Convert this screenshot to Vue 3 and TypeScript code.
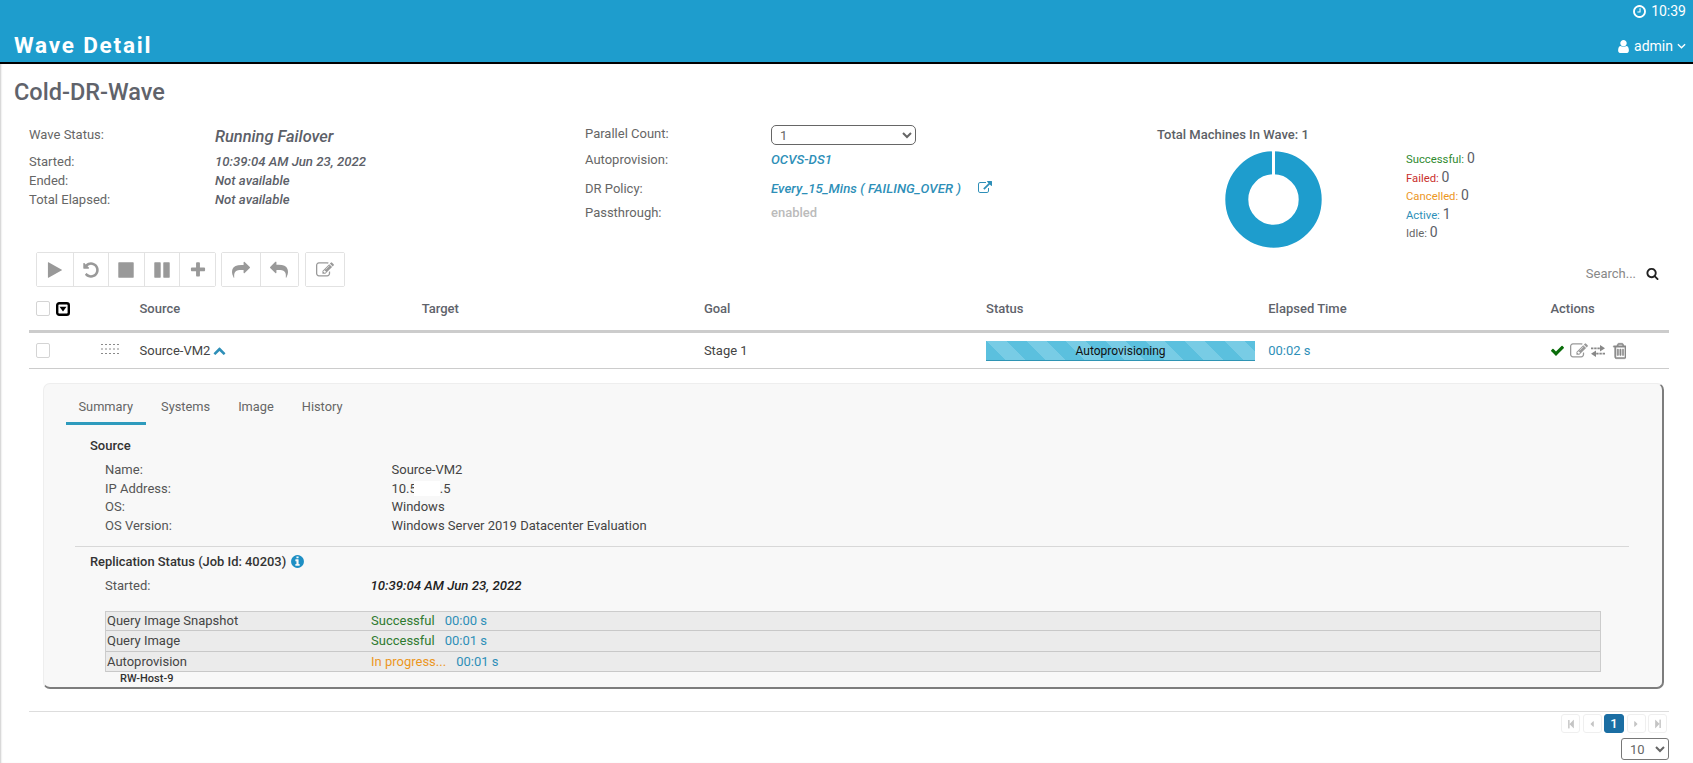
<script setup lang="ts">
const leftRows = [
  { label: 'Wave Status:', value: 'Running Failover', big: true },
  { label: 'Started:', value: '10:39:04 AM Jun 23, 2022', big: false },
  { label: 'Ended:', value: 'Not available', big: false },
  { label: 'Total Elapsed:', value: 'Not available', big: false },
]
const legend = [
  { label: 'Successful:', value: 0, cls: 'ok' },
  { label: 'Failed:', value: 0, cls: 'bad' },
  { label: 'Cancelled:', value: 0, cls: 'warn' },
  { label: 'Active:', value: 1, cls: 'act' },
  { label: 'Idle:', value: 0, cls: 'idle' },
]
const columns = ['Source', 'Target', 'Goal', 'Status', 'Elapsed Time', 'Actions']
const tabs = ['Summary', 'Systems', 'Image', 'History']
const steps = [
  { name: 'Query Image Snapshot', status: 'Successful', cls: 'ok', time: '00:00 s' },
  { name: 'Query Image', status: 'Successful', cls: 'ok', time: '00:01 s' },
  { name: 'Autoprovision', status: 'In progress...', cls: 'warn', time: '00:01 s' },
]
const P = {
  play: 'M1576 927l-1328 738q-23 13-39.500 3t-16.500-36v-1472q0-26 16.500-36t39.500 3l1328 738q23 13 23 31t-23 31z',
  undo: 'M1664 896q0 156-61 298t-164 245-245 164-298 61q-172 0-327-72.500t-264-204.500q-7-10-6.500-22.500t8.500-20.500l137-138q10-9 25-9 16 2 23 12 73 95 179 147t225 52q104 0 198.500-40.500t163.500-109.500 109.500-163.500 40.500-198.500-40.500-198.500-109.500-163.500-163.500-109.500-198.500-40.500q-98 0-188 35.500t-160 101.500l137 138q31 30 14 69-17 40-59 40h-448q-26 0-45-19t-19-45v-448q0-42 40-59 39-17 69 14l130 129q107-101 244.500-156.500t284.500-55.500q156 0 298 61t245 164 164 245 61 298z',
  stop: 'M1664 192v1408q0 26-19 45t-45 19h-1408q-26 0-45-19t-19-45v-1408q0-26 19-45t45-19h1408q26 0 45 19t19 45z',
  pause: 'M1664 192v1408q0 26-19 45t-45 19h-512q-26 0-45-19t-19-45v-1408q0-26 19-45t45-19h512q26 0 45 19t19 45zm-896 0v1408q0 26-19 45t-45 19h-512q-26 0-45-19t-19-45v-1408q0-26 19-45t45-19h512q26 0 45 19t19 45z',
  plus: 'M1600 736v192q0 40-28 68t-68 28h-416v416q0 40-28 68t-68 28h-192q-40 0-68-28t-28-68v-416h-416q-40 0-68-28t-28-68v-192q0-40 28-68t68-28h416v-416q0-40 28-68t68-28h192q40 0 68 28t28 68v416h416q40 0 68 28t28 68z',
  share: 'M1792 640q0 26-19 45l-512 512q-19 19-45 19t-45-19-19-45v-256h-224q-98 0-175.500 6t-154 21.500-133 42.500-105.500 69.500-79.500 101.500-47.500 140-18 185q0 55 5 123 0 6 2.500 23.500t2.500 26.500q0 15-8.500 25t-23.500 10q-16 0-28-17-7-9-13-22t-13.500-30-10.500-24q-127-285-127-451 0-199 53-333 162-403 875-403h224v-256q0-26 19-45t45-19 45 19l512 512q19 19 19 45z',
  reply: 'M1792 1120q0 166-127 451-3 7-10.500 24t-13.500 30-13 22q-12 17-28 17-15 0-23.500-10t-8.500-25q0-9 2.500-26.500t2.500-23.500q5-68 5-123 0-101-17.500-181t-48.500-138.500-80-101-105.500-69.500-133-42.500-154-21.500-175.500-6h-224v256q0 26-19 45t-45 19-45-19l-512-512q-19-19-19-45t19-45l512-512q19-19 45-19t45 19 19 45v256h224q713 0 875 403 53 134 53 333z',
  edit: 'M888 1184l116-116-152-152-116 116v56h96v96h56zm440-720q-16-16-33 1l-350 350q-17 17-1 33t33-1l350-350q17-17 1-33zm80 594v190q0 119-84.500 203.500t-203.500 84.500h-832q-119 0-203.500-84.500t-84.500-203.500v-832q0-119 84.500-203.500t203.500-84.500h832q63 0 117 25 15 7 18 23 3 17-9 29l-49 49q-14 14-32 8-23-6-45-6h-832q-66 0-113 47t-47 113v832q0 66 47 113t113 47h832q66 0 113-47t47-113v-126q0-13 9-22l64-64q15-15 35-7t20 29zm-96-738l288 288-672 672h-288v-288zm444 132l-92 92-288-288 92-92q28-28 68-28t68 28l152 152q28 28 28 68t-28 68z',
  check: 'M1671 566q0 40-28 68l-724 724-136 136q-28 28-68 28t-68-28l-136-136-362-362q-28-28-28-68t28-68l136-136q28-28 68-28t68 28l294 295 656-657q28-28 68-28t68 28l136 136q28 28 28 68z',
  trash: 'M704 736v576q0 14-9 23t-23 9h-64q-14 0-23-9t-9-23v-576q0-14 9-23t23-9h64q14 0 23 9t9 23zm256 0v576q0 14-9 23t-23 9h-64q-14 0-23-9t-9-23v-576q0-14 9-23t23-9h64q14 0 23 9t9 23zm256 0v576q0 14-9 23t-23 9h-64q-14 0-23-9t-9-23v-576q0-14 9-23t23-9h64q14 0 23 9t9 23zm128 724v-948h-896v948q0 22 7 40.500t14.500 27 10.500 8.500h832q3 0 10.500-8.500t14.500-27 7-40.500zm-672-1076h448l-48-117q-7-9-17-11h-317q-10 2-17 11zm928 32v64q0 14-9 23t-23 9h-96v948q0 83-47 143.500t-113 60.500h-832q-66 0-113-58.500t-47-141.500v-952h-96q-14 0-23-9t-9-23v-64q0-14 9-23t23-9h309l70-167q15-37 54-63t79-26h320q40 0 79 26t54 63l70 167h309q14 0 23 9t9 23z',
  chevUp: 'M1683 1331l-166 165q-19 19-45 19t-45-19l-531-531-531 531q-19 19-45 19t-45-19l-166-165q-19-19-19-45.500t19-45.500l742-741q19-19 45-19t45 19l742 741q19 19 19 45.500t-19 45.500z',
  ext: 'M1408 928v320q0 119-84.500 203.500t-203.500 84.500h-832q-119 0-203.500-84.500t-84.500-203.500v-832q0-119 84.500-203.500t203.500-84.500h704q14 0 23 9t9 23v64q0 14-9 23t-23 9h-704q-66 0-113 47t-47 113v832q0 66 47 113t113 47h832q66 0 113-47t47-113v-320q0-14 9-23t23-9h64q14 0 23 9t9 23zm384-864v512q0 26-19 45t-45 19-45-19l-176-176-652 652q-10 10-23 10t-23-10l-114-114q-10-10-10-23t10-23l652-652-176-176q-19-19-19-45t19-45 45-19h512q26 0 45 19t19 45z',
  info: 'M1152 1376v-160q0-14-9-23t-23-9h-96v-512q0-14-9-23t-23-9h-320q-14 0-23 9t-9 23v160q0 14 9 23t23 9h96v320h-96q-14 0-23 9t-9 23v160q0 14 9 23t23 9h448q14 0 23-9t9-23zm-128-896v-160q0-14-9-23t-23-9h-192q-14 0-23 9t-9 23v160q0 14 9 23t23 9h192q14 0 23-9t9-23zm640 416q0 209-103 385.500t-279.500 279.500-385.500 103-385.500-103-279.500-279.500-103-385.500 103-385.500 279.500-279.500 385.500-103 385.500 103 279.500 279.500 103 385.500z',
  clock: 'M1024 544v448q0 14-9 23t-23 9h-320q-14 0-23-9t-9-23v-64q0-14 9-23t23-9h224v-352q0-14 9-23t23-9h64q14 0 23 9t9 23zm416 352q0-148-73-273t-198-198-273-73-273 73-198 198-73 273 73 273 198 198 273 73 273-73 198-198 73-273zm224 0q0 209-103 385.500t-279.500 279.500-385.500 103-385.500-103-279.500-279.500-103-385.500 103-385.500 279.500-279.500 385.500-103 385.500 103 279.500 279.500 103 385.500z',
  user: 'M1536 1399q0 109-62.500 187t-150.500 78h-854q-88 0-150.500-78t-62.500-187q0-85 8.500-160.500t31.500-152 58.500-131 94-89 134.500-34.500q131 128 313 128t313-128q76 0 134.500 34.500t94 89 58.500 131 31.500 152 8.500 160.500zm-256-887q0 159-112.500 271.500t-271.500 112.500-271.500-112.500-112.500-271.500 112.500-271.500 271.500-112.500 271.500 112.500 112.500 271.500z',
  search: 'M1216 832q0-185-131.500-316.500t-316.500-131.500-316.500 131.500-131.500 316.500 131.500 316.500 316.500 131.500 316.500-131.500 131.500-316.500zm512 832q0 52-38 90t-90 38q-54 0-90-38l-343-342q-179 124-399 124-143 0-273.500-55.500t-225-150-150-225-55.500-273.500 55.500-273.500 150-225 225-150 273.500-55.500 273.500 55.500 225 150 150 225 55.500 273.500q0 220-124 399l343 343q37 37 37 90z',
  first: 'M1363 141q19-19 32-13t13 32v1472q0 26-13 32t-32-13l-710-710q-9-9-13-19v710q0 26-19 45t-45 19h-128q-26 0-45-19t-19-45v-1408q0-26 19-45t45-19h128q26 0 45 19t19 45v710q4-10 13-19z',
  last: 'M429 1651q-19 19-32 13t-13-32v-1472q0-26 13-32t32 13l710 710q9 9 13 19v-710q0-26 19-45t45-19h128q26 0 45 19t19 45v1408q0 26-19 45t-45 19h-128q-26 0-45-19t-19-45v-710q-4 10-13 19z',
  prev: 'M1216 448v896q0 26-19 45t-45 19-45-19l-448-448q-19-19-19-45t19-45l448-448q19-19 45-19t45 19 19 45z',
  next: 'M1152 896q0 26-19 45l-448 448q-19 19-45 19t-45-19-19-45v-896q0-26 19-45t45-19 45 19l448 448q19 19 19 45z',
}
const toolbar = [
  [P.play, P.undo, P.stop, P.pause, P.plus],
  [P.share, P.reply],
  [P.edit],
]
</script>

<template>
  <div class="page">
    <header class="topbar">
      <div class="clock">
        <svg class="ic-clock" viewBox="0 0 1792 1792"><path :d="P.clock" /></svg>
        <span>10:39</span>
      </div>
      <div class="titlebar">
        <h1>Wave Detail</h1>
        <div class="user">
          <svg class="ic-user" viewBox="0 0 1792 1792"><path :d="P.user" /></svg>
          <span>admin</span>
          <svg class="ic-down" viewBox="0 0 10 6"><path d="M1 1l4 4 4-4" /></svg>
        </div>
      </div>
    </header>

    <main class="content">
      <h2 class="wave-name">Cold-DR-Wave</h2>

      <section class="summary">
        <div class="col-left">
          <template v-for="r in leftRows" :key="r.label">
            <span class="lbl">{{ r.label }}</span>
            <span class="val-it" :class="{ big: r.big }">{{ r.value }}</span>
          </template>
        </div>
        <div class="col-mid">
          <span class="lbl">Parallel Count:</span>
          <select class="sel-par"><option>1</option></select>
          <span class="lbl">Autoprovision:</span>
          <span class="link-it">OCVS-DS1</span>
          <span class="lbl">DR Policy:</span>
          <span class="policy">
            <span class="link-it">Every_15_Mins ( FAILING_OVER )</span>
            <svg class="ic-ext" viewBox="0 0 1792 1792"><path :d="P.ext" /></svg>
          </span>
          <span class="lbl">Passthrough:</span>
          <span class="enabled">enabled</span>
        </div>
        <div class="col-chart">
          <div class="chart-title">Total Machines In Wave: 1</div>
          <div class="chart-body">
            <svg class="donut" viewBox="0 0 97 97">
              <circle cx="48.5" cy="48.5" r="36.7" fill="none" stroke="#1e9dcd" stroke-width="23" />
              <rect x="47" y="0" width="3" height="25" fill="#fff" />
            </svg>
            <ul class="legend">
              <li v-for="l in legend" :key="l.label">
                <span :class="l.cls">{{ l.label }}</span> <b>{{ l.value }}</b>
              </li>
            </ul>
          </div>
        </div>
      </section>

      <div class="toolrow">
        <div class="toolbar">
          <div v-for="(g, gi) in toolbar" :key="gi" class="btn-group">
            <button v-for="(d, i) in g" :key="i" class="tbtn">
              <svg viewBox="0 0 1792 1792"><path :d="d" /></svg>
            </button>
          </div>
        </div>
        <div class="search">
          <span>Search...</span>
          <svg viewBox="0 0 1792 1792"><path :d="P.search" /></svg>
        </div>
      </div>

      <div class="grid thead">
        <div class="cell-sel">
          <span class="chk"></span>
          <svg class="ic-menu" viewBox="0 0 14 14">
            <rect x="1.200" y="1.200" width="11.600" height="11.600" rx="2" fill="#fff" stroke="#000" stroke-width="2.400" />
            <path d="M3.500 4.800h7L7 9.500z" fill="#000" />
          </svg>
        </div>
        <div v-for="c in columns" :key="c" class="th">{{ c }}</div>
      </div>

      <div class="grid trow">
        <div class="cell-sel">
          <span class="chk"></span>
          <svg class="grip" viewBox="0 0 20 12">
            <path d="M0 1.500h20M0 6h20M0 10.500h20" stroke="#8a8a8a" stroke-width="1" stroke-dasharray="2 2" />
          </svg>
        </div>
        <div class="src">
          <span>Source-VM2</span>
          <svg viewBox="0 0 1792 1792"><path :d="P.chevUp" /></svg>
        </div>
        <div></div>
        <div class="td">Stage 1</div>
        <div class="bar">Autoprovisioning</div>
        <div class="td time">00:02 s</div>
        <div class="actions">
          <svg class="a-check" viewBox="0 0 1792 1792"><path :d="P.check" /></svg>
          <svg class="a-edit" viewBox="0 0 1792 1792"><path :d="P.edit" /></svg>
          <svg class="a-swap" viewBox="0 0 14 12">
            <path d="M0 3.300h9.500" stroke="#888" stroke-width="1.800" stroke-dasharray="2.400 .8" />
            <path d="M9 0l5 3.300-5 3.300z" fill="#888" />
            <path d="M14 8.700H4.500" stroke="#888" stroke-width="1.800" stroke-dasharray="2.400 .8" />
            <path d="M5 5.400L0 8.700 5 12z" fill="#888" />
          </svg>
          <svg class="a-trash" viewBox="0 0 1408 1792"><path :d="P.trash" /></svg>
        </div>
      </div>

      <section class="panel">
        <nav class="tabs">
          <a v-for="(t, i) in tabs" :key="t" class="tab" :class="{ on: i === 0 }">{{ t }}</a>
        </nav>

        <h3 class="sec sec-source">Source</h3>
        <dl class="kv">
          <dt>Name:</dt><dd>Source-VM2</dd>
          <dt>IP Address:</dt><dd>10.5<span class="mask"></span>.5</dd>
          <dt>OS:</dt><dd>Windows</dd>
          <dt>OS Version:</dt><dd>Windows Server 2019 Datacenter Evaluation</dd>
        </dl>
        <hr class="rule" />
        <h3 class="sec sec-rep">
          Replication Status (Job Id: 40203)
          <svg viewBox="0 0 1792 1792"><path :d="P.info" /></svg>
        </h3>
        <div class="started">
          <span>Started:</span>
          <em>10:39:04 AM Jun 23, 2022</em>
        </div>
        <div class="steps">
          <div v-for="s in steps" :key="s.name" class="step">
            <span class="step-name">{{ s.name }}</span>
            <span :class="s.cls">{{ s.status }}</span>
            <span class="step-time">{{ s.time }}</span>
          </div>
        </div>
        <div class="host">RW-Host-9</div>
      </section>

      <footer class="foot">
        <div class="pager">
          <span class="pg"><svg viewBox="0 0 1792 1792"><path :d="P.first" /></svg></span>
          <span class="pg"><svg viewBox="0 0 1792 1792"><path :d="P.prev" /></svg></span>
          <span class="pg active">1</span>
          <span class="pg"><svg viewBox="0 0 1792 1792"><path :d="P.next" /></svg></span>
          <span class="pg"><svg viewBox="0 0 1792 1792"><path :d="P.last" /></svg></span>
        </div>
        <select class="sel-size"><option>10</option></select>
      </footer>
    </main>
  </div>
</template>

<style>
html, body { margin: 0; background: #fff; }
</style>

<style scoped>
.page {
  width: 1693px;
  height: 763px;
  overflow: hidden;
  background: #fff;
  font-family: Roboto, "Liberation Sans", sans-serif;
  font-size: 13px;
  color: #666;
}
.topbar {
  box-sizing: border-box;
  height: 64px;
  background: #1e9dcd;
  border-bottom: 2px solid #000;
  color: #fff;
  padding: 0 7px 0 14px;
}
.clock {
  height: 22px;
  display: flex;
  justify-content: flex-end;
  align-items: center;
  gap: 4px;
  font-size: 14px;
}
.ic-clock { width: 15px; height: 15px; fill: #fff; }
.titlebar {
  height: 40px;
  display: flex;
  justify-content: space-between;
  align-items: center;
  padding-top: 6px;
  box-sizing: border-box;
}
h1 {
  margin: 0;
  font-size: 22.500px;
  font-weight: 700;
  letter-spacing: 1.800px;
}
.user { display: flex; align-items: center; font-size: 14px; font-weight: 400; padding-top: 2px; }
.ic-user { width: 15px; height: 15px; fill: #fff; margin-right: 3px; }
.ic-down { width: 9px; height: 6px; margin-left: 4px; fill: none; stroke: #fff; stroke-width: 1.500; }

.content {
  box-shadow: inset 2px 0 2px -1px #ccc;
  height: 699px;
  overflow: hidden;
}
.wave-name {
  margin: 0;
  padding: 14px 0 0 14px;
  height: 46px;
  box-sizing: border-box;
  font-size: 23.500px;
  line-height: 28px;
  font-weight: 500;
  color: #60636b;
}
.summary {
  display: flex;
  padding: 15px 0 0 29px;
  height: 142px;
  box-sizing: border-box;
}
.col-left {
  width: 556px;
  display: grid;
  grid-template-columns: 186px 1fr;
  grid-template-rows: 27px 19px 19px 19px;
  align-content: start;
}
.lbl { line-height: 19px; }
.val-it { line-height: 19px; font-size: 13.200px; font-style: italic; font-weight: 500; color: #5c6068; }
.val-it.big { font-size: 16.400px; line-height: 23px; }
.col-mid {
  width: 572px;
  margin-top: -1px;
  display: grid;
  grid-template-columns: 186px 1fr;
  grid-template-rows: 22px 26px 32px 16px;
  align-items: center;
  align-content: start;
}
.col-mid > .lbl:first-child { margin-top: -3px; }
.sel-par {
  width: 145px;
  height: 20px;
  border: 1px solid #666;
  border-radius: 5px;
  background: #fff;
  color: #666;
  font: 13px Roboto, sans-serif;
  padding: 0 4px;
}
.link-it { font-size: 13.200px; font-style: italic; font-weight: 500; color: #2e8fb8; }
.policy { display: flex; align-items: center; }
.policy .link-it { letter-spacing: 0.060px; }
.ic-ext { width: 14px; height: 14px; fill: #2e8fb8; margin-left: 17px; }
.enabled { color: #bbb; font-weight: 500; }
.chart-title { height: 24px; line-height: 20px; font-weight: 500; color: #5c5f66; }
.chart-body { display: flex; align-items: flex-start; }
.donut { width: 97px; height: 97px; margin: 2px 0 0 68px; }
.legend { list-style: none; margin: 0 0 0 84px; padding: 0; font-size: 11.300px; }
.legend li { height: 18.600px; line-height: 18.600px; }
.legend b { font-weight: 400; font-size: 14px; color: #5c6068; }
.ok { color: #2f8a2f; }
.bad { color: #c9302c; }
.warn { color: #ec971f; }
.act { color: #2e8fb8; }
.idle { color: #666; }

.toolrow {
  height: 35px;
  padding: 0 34px 0 36px;
  display: flex;
  justify-content: space-between;
  align-items: flex-end;
}
.toolbar { display: flex; gap: 5px; }
.toolbar .btn-group:last-child { margin-left: 1px; }
.btn-group { display: flex; border: 1px solid #e2e2e2; border-radius: 2px; }
.tbtn {
  width: 35.600px;
  height: 33px;
  padding: 0;
  border: 0;
  border-left: 1px solid #e2e2e2;
  background: #fff;
  display: flex;
  align-items: center;
  justify-content: center;
}
.btn-group:nth-child(n + 2) .tbtn { width: 38px; }
.tbtn:first-child { border-left: 0; }
.tbtn svg { width: 18px; height: 18px; fill: #999; }
.search { display: flex; align-items: center; gap: 10px; height: 26px; margin-bottom: 1px; color: #888; }
.search svg { width: 13px; height: 13px; fill: #222; }

.grid {
  display: grid;
  grid-template-columns: 110.500px repeat(5, 282.200px) 1fr;
  width: 1640px;
  margin-left: 29px;
  align-items: center;
}
.thead { height: 46px; border-bottom: 3px solid #ccc; box-sizing: border-box; }
.th { font-weight: 500; color: #60636b; }
.cell-sel { display: flex; align-items: center; padding-left: 7px; }
.chk {
  box-sizing: border-box;
  width: 14px;
  height: 15px;
  border: 1px solid #d4d4d4;
  border-radius: 2px;
  background: #fff;
}
.ic-menu { width: 14px; height: 14px; margin-left: 6px; }
.trow { height: 36px; border-bottom: 1px solid #ccc; box-sizing: border-box; }
.grip { width: 20px; height: 12px; margin-left: 51px; margin-top: -3px; }
.src { display: flex; align-items: center; color: #444; }
.src svg { width: 13px; height: 13px; fill: #2e8fb8; margin-left: 3px; }
.td { color: #444; }
.time { color: #2e8fb8; }
.bar {
  width: 269px;
  height: 20px;
  box-sizing: border-box;
  line-height: 20px;
  text-align: center;
  font-size: 12px;
  color: #111;
  border-bottom: 1px solid #2f94b4;
  background: repeating-linear-gradient(45deg, #5bc0de 0 14px, #78cce5 14px 28px);
}
.actions { display: flex; align-items: center; }
.a-check { width: 15px; height: 15px; fill: #0a6d0a; }
.a-edit { width: 18px; height: 18px; fill: #999; margin-left: 5px; }
.a-swap { width: 14px; height: 12px; margin-left: 3px; }
.a-trash { width: 15px; height: 18px; fill: #888; stroke: #888; stroke-width: 50px; margin-left: 6px; }

.panel {
  box-sizing: border-box;
  width: 1621px;
  height: 306px;
  margin: 14px 0 0 43px;
  padding: 0 0 0 22px;
  background: #f8f8f8;
  border: 1px solid #eee;
  border-right: 2px solid #7d7d7d;
  border-bottom: 2px solid #7d7d7d;
  border-radius: 7px;
}
.tabs { display: flex; gap: 3px; height: 41px; }
.tab { padding: 15px 12.500px 0; height: 41px; font-size: 12.800px; box-sizing: border-box; line-height: 16px; color: #666; }
.tab.on { border-bottom: 3px solid #2e9bbd; }
.sec { margin: 0; font-size: 13px; font-weight: 500; color: #333; line-height: 18px; }
.sec-source { margin: 12px 0 0 24px; }
.kv {
  display: grid;
  grid-template-columns: 286.500px 1fr;
  grid-auto-rows: 18.600px;
  margin: 6px 0 0 39px;
  line-height: 18.600px;
}
.kv dt { color: #555; }
.kv dd { margin: 0; color: #444; }
.mask { display: inline-block; width: 26px; height: 15px; background: #fff; margin-left: -3px; vertical-align: -3px; }
.rule { border: 0; border-top: 1px solid #d8d8d8; margin: 11px 33px 0 9px; }
.sec-rep { margin: 6px 0 0 24px; display: flex; align-items: center; gap: 4px; font-size: 12.900px; }
.sec-rep svg { width: 15px; height: 15px; fill: #1e8fc4; margin-top: -2px; }
.started { display: flex; margin: 6px 0 0 39px; line-height: 18px; color: #555; }
.started span { width: 265.500px; }
.started em { color: #222; font-weight: 500; font-size: 13.200px; }
.steps {
  width: 1496px;
  margin: 16px 0 0 39px;
  border: 1px solid #ccc;
  border-bottom: 0;
  background: #ebebeb;
  box-sizing: border-box;
}
.step {
  display: flex;
  height: 20.500px;
  line-height: 19px;
  border-bottom: 1.500px solid #c8c8c8;
  box-sizing: border-box;
}
.step:first-child { height: 19px; line-height: 18px; }
.step-name { width: 265px; padding-left: 1px; color: #444; box-sizing: border-box; }
.step .ok { color: #2f7a2f; }
.step-time { color: #2e8fb8; margin-left: 10px; }
.host { margin: 0 0 0 54px; font-size: 11px; line-height: 14px; font-weight: 500; color: #333; }

.foot {
  box-sizing: border-box;
  width: 1640px;
  margin: 22px 0 0 29px;
  border-top: 1px solid #ddd;
  padding-top: 2px;
  display: flex;
  flex-direction: column;
  align-items: flex-end;
}
.pager { display: flex; gap: 2.500px; padding-right: 2px; }
.pg {
  box-sizing: border-box;
  width: 19px;
  height: 19px;
  border: 1px solid #efefef;
  border-radius: 3px;
  display: flex;
  align-items: center;
  justify-content: center;
}
.pg svg { width: 10px; height: 10px; fill: #c4c4c4; }
.pg.active {
  background: #1b6ea3;
  border-color: #1b6ea3;
  color: #fff;
  width: 20px;
  font-size: 13px;
  font-weight: 500;
}
.sel-size {
  width: 48px;
  height: 22px;
  margin-top: 5px;
  border: 1px solid #777;
  border-radius: 3px;
  background: #fff;
  color: #666;
  font: 13px Roboto, sans-serif;
  padding: 0 4px;
}
</style>
